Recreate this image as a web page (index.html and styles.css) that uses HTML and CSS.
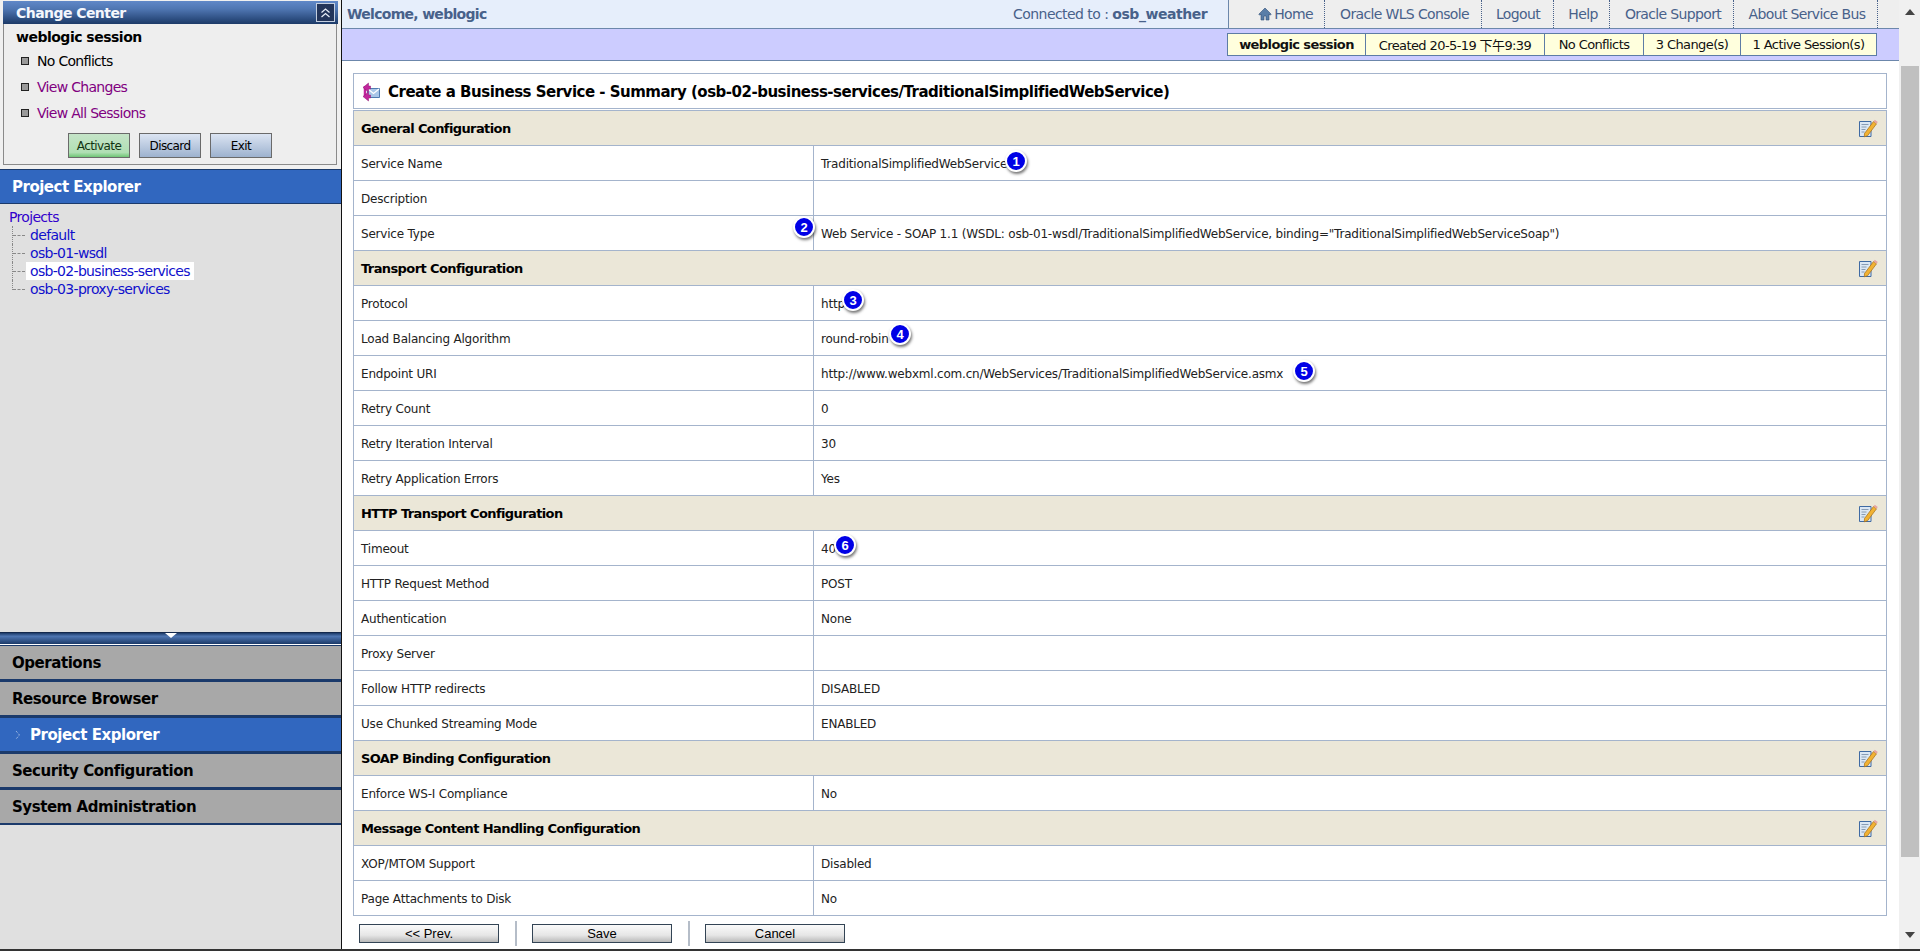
FILE: index.html
```html
<!DOCTYPE html>
<html lang="en">
<head>
<meta charset="utf-8">
<title>Create a Business Service - Summary</title>
<link rel="stylesheet" href="styles.css">
</head>
<body>
<div class="app">
  <aside class="left">
    <section class="cc">
      <div class="cc-head"><span>Change Center</span>
        <span class="cc-toggle"><svg width="13" height="12" viewBox="0 0 13 12"><path d="M2.5 5.5 6.5 2l4 3.500M2.500 10 6.500 6.500l4 3.500" fill="none" stroke="#e8eef8" stroke-width="1.200"/></svg></span>
      </div>
      <div class="cc-body">
        <div class="cc-session">weblogic session</div>
        <ul class="cc-list">
          <li>No Conflicts</li>
          <li class="visited">View Changes</li>
          <li class="visited">View All Sessions</li>
        </ul>
        <div class="cc-btns">
          <span class="cc-btn go">Activate</span>
          <span class="cc-btn">Discard</span>
          <span class="cc-btn">Exit</span>
        </div>
      </div>
    </section>
    <div class="pe-head">Project Explorer</div>
    <div class="tree">
      <div class="tree-root">Projects</div>
      <ul class="tree-list">
        <li><span class="tree-link">default</span></li>
        <li><span class="tree-link">osb-01-wsdl</span></li>
        <li><span class="tree-link sel">osb-02-business-services</span></li>
        <li><span class="tree-link">osb-03-proxy-services</span></li>
      </ul>
    </div>
    <div class="splitter"><svg width="14" height="5" viewBox="0 0 14 5"><path d="M1 0h12L7 5z" fill="#fff"/></svg></div>
    <nav class="nav">
      <div class="nav-item">Operations</div>
      <div class="nav-item">Resource Browser</div>
      <div class="nav-item on"><svg class="nav-arrow" width="6" height="10" viewBox="0 0 6 10"><path d="M1 1l3.500 4L1 9" fill="none" stroke="#b9cdea" stroke-width="1" stroke-dasharray="1 1"/></svg>Project Explorer</div>
      <div class="nav-item">Security Configuration</div>
      <div class="nav-item">System Administration</div>
    </nav>
    <div class="left-fill"></div>
  </aside>

  <main class="right">
    <header class="top">
      <div class="welcome">Welcome, weblogic</div>
      <div class="connected">Connected to : <b>osb_weather</b></div>
      <div class="links">
        <span class="lnk home"><svg width="14" height="14" viewBox="0 0 14 14"><path d="M7 1 .8 7.200l1 1L3 7v6h3V9h2v4h3V7l1.200 1.200 1-1z" fill="#5a7ea8" stroke="#2f4d75" stroke-width=".6"/></svg>Home</span>
        <span class="lnk wls">Oracle WLS Console</span>
        <span class="lnk logout">Logout</span>
        <span class="lnk help">Help</span>
        <span class="lnk support">Oracle Support</span>
        <span class="lnk about">About Service Bus</span>
      </div>
    </header>
    <div class="sessionbar">
      <div class="session">
        <span class="s-cell s1">weblogic session</span>
        <span class="s-cell s2">Created 20-5-19 下午9:39</span>
        <span class="s-cell s3">No Conflicts</span>
        <span class="s-cell s4">3 Change(s)</span>
        <span class="s-cell s5">1 Active Session(s)</span>
      </div>
    </div>

    <div class="content">
      <h1 class="title">
        <svg width="20" height="20" viewBox="0 0 20 20"><path d="M6.500 6.500h12v9h-12z" fill="#a9c6e8" stroke="#4f7bb0"/><path d="M7 7l5.500 4.500L18 7" fill="none" stroke="#fff" stroke-width="1.200"/><path d="M4 4v11" stroke="#c2259c" stroke-width="2.500"/><path d="M2 5.500 7.500 1v3h2v3h-2v3zM2 14.500 7.500 10v3h2v3h-2v3z" fill="#c2259c" stroke="#8d1b72" stroke-width=".5"/></svg>
        Create a Business Service - Summary (osb-02-business-services/TraditionalSimplifiedWebService)
      </h1>
      <table class="sum">
        <colgroup><col class="c1"><col></colgroup>
        <tbody>
          <tr class="sec"><th colspan="2">General Configuration<svg class="edit" width="20" height="20" viewBox="0 0 20 20"><use href="#ed"/></svg></th></tr>
          <tr><td>Service Name</td><td>TraditionalSimplifiedWebService</td></tr>
          <tr><td>Description</td><td></td></tr>
          <tr><td>Service Type</td><td>Web Service - SOAP 1.1 (WSDL: osb-01-wsdl/TraditionalSimplifiedWebService, binding="TraditionalSimplifiedWebServiceSoap")</td></tr>
          <tr class="sec"><th colspan="2">Transport Configuration<svg class="edit" width="20" height="20" viewBox="0 0 20 20"><use href="#ed"/></svg></th></tr>
          <tr><td>Protocol</td><td>http</td></tr>
          <tr><td>Load Balancing Algorithm</td><td>round-robin</td></tr>
          <tr><td>Endpoint URI</td><td>http://www.webxml.com.cn/WebServices/TraditionalSimplifiedWebService.asmx</td></tr>
          <tr><td>Retry Count</td><td>0</td></tr>
          <tr><td>Retry Iteration Interval</td><td>30</td></tr>
          <tr><td>Retry Application Errors</td><td>Yes</td></tr>
          <tr class="sec"><th colspan="2">HTTP Transport Configuration<svg class="edit" width="20" height="20" viewBox="0 0 20 20"><use href="#ed"/></svg></th></tr>
          <tr><td>Timeout</td><td>40</td></tr>
          <tr><td>HTTP Request Method</td><td>POST</td></tr>
          <tr><td>Authentication</td><td>None</td></tr>
          <tr><td>Proxy Server</td><td></td></tr>
          <tr><td>Follow HTTP redirects</td><td>DISABLED</td></tr>
          <tr><td>Use Chunked Streaming Mode</td><td>ENABLED</td></tr>
          <tr class="sec"><th colspan="2">SOAP Binding Configuration<svg class="edit" width="20" height="20" viewBox="0 0 20 20"><use href="#ed"/></svg></th></tr>
          <tr><td>Enforce WS-I Compliance</td><td>No</td></tr>
          <tr class="sec"><th colspan="2">Message Content Handling Configuration<svg class="edit" width="20" height="20" viewBox="0 0 20 20"><use href="#ed"/></svg></th></tr>
          <tr><td>XOP/MTOM Support</td><td>Disabled</td></tr>
          <tr><td>Page Attachments to Disk</td><td>No</td></tr>
        </tbody>
      </table>
      <div class="actions">
        <span class="act">&lt;&lt; Prev.</span>
        <span class="act-sep"></span>
        <span class="act">Save</span>
        <span class="act-sep"></span>
        <span class="act">Cancel</span>
      </div>
      <span class="badge b1">1</span>
      <span class="badge b2">2</span>
      <span class="badge b3">3</span>
      <span class="badge b4">4</span>
      <span class="badge b5">5</span>
      <span class="badge b6">6</span>
    </div>
  </main>

  <div class="scroll">
    <svg class="sc-arrow" width="10" height="6" viewBox="0 0 10 6"><path d="M5 0l5 6H0z" fill="#444"/></svg>
    <div class="sc-thumb"></div>
    <svg class="sc-arrow" width="10" height="6" viewBox="0 0 10 6"><path d="M0 0h10L5 6z" fill="#444"/></svg>
  </div>
</div>
<svg class="defs" width="0" height="0"><defs>
  <g id="ed">
    <path d="M1.500 3.500h11.500v15H1.500z" fill="#dbe7f5" stroke="#3f6aa3"/>
    <path d="M3.500 6.500h7M3.500 9h5M3.500 11.500h4M3.500 14h3" stroke="#7f93ad" stroke-width=".9"/>
    <path d="M6.500 15.500 15.500 3.500l3 2.300-9 12-3.200 1z" fill="#f1b233" stroke="#a56d15" stroke-width=".7"/>
    <path d="M15.500 3.500 16.800 1.800l3 2.300-1.300 1.700z" fill="#e6a5a0"/>
  </g>
</defs></svg>
</body>
</html>
```
FILE: styles.css
```css
* { box-sizing: border-box; }
html, body { margin: 0; height: 100%; overflow: hidden; background: #fff; }
body { font-family: "DejaVu Sans", Verdana, sans-serif; color: #000; }
ul { list-style: none; margin: 0; padding: 0; }
.defs { position: absolute; }

.app { display: flex; height: 951px; border-bottom: 2px solid #333; }

/* left column */
.left { width: 342px; flex: none; display: flex; flex-direction: column; background: #f0f0f0; border-right: 1px solid #111; padding-top: 1px; }
.cc { margin: 0 4px 4px 3px; height: 164px; display: flex; flex-direction: column; }
.cc-head { height: 23px; flex: none; display: flex; align-items: center; justify-content: space-between; padding: 0 3px 0 13px; margin-right: -1px; font-weight: 700; font-size: 14px; letter-spacing: -.55px; color: #f4f7fc; background: linear-gradient(#6088c8, #4f76b2 35%, #1c3a68); }
.cc-toggle { width: 19px; height: 19px; display: flex; align-items: center; justify-content: center; background: #23355a; border: 1px solid #c4cfe0; }
.cc-body { flex: 1; background: #eee; border: 1px solid #8a8a8a; border-top: 0; padding: 4px 0 0 12px; }
.cc-session { font-weight: 700; font-size: 14px; letter-spacing: -.5px; line-height: 18px; }
.cc-list { margin-top: 5px; font-size: 14px; letter-spacing: -.7px; }
.cc-list li { height: 26px; line-height: 21px; padding-left: 21px; position: relative; }
.cc-list li::before { content: ""; position: absolute; left: 5px; top: 6px; width: 6px; height: 6px; background: #999; border: 1px solid #222; }
.visited { color: #800080; }
.cc-btns { display: flex; gap: 9px; margin: 4px 0 0 52px; }
.cc-btn { width: 62px; height: 25px; display: flex; align-items: center; justify-content: center; font-size: 12px; letter-spacing: -.6px; border: 1px solid #6a6a6a; background: linear-gradient(#dbe4f2, #9db2cf); }
.cc-btn.go { background: linear-gradient(#c5e4c8, #b0dfb4 80%, #6fc676); color: #113311; }

.pe-head { height: 35px; flex: none; display: flex; align-items: center; padding-left: 12px; background: #3167bf; border-top: 1px solid #1b3a6b; border-bottom: 1px solid #1b3a6b; color: #fff; font-weight: 700; font-size: 15px; letter-spacing: -.5px; }
.tree { height: 428px; flex: none; background: #e0e0e0; padding: 4px 0 0 9px; font-size: 14px; letter-spacing: -.68px; color: #1010cc; line-height: 18px; }
.tree-root { color: #3300cc; }
.tree-list li { padding-left: 18px; margin-left: 3px; position: relative; }
.tree-list li::before { content: ""; position: absolute; left: 0; top: 0; bottom: 0; border-left: 1px dotted #888; }
.tree-list li:last-child::before { bottom: 8px; }
.tree-list li::after { content: ""; position: absolute; left: 1px; top: 9px; width: 12px; border-top: 1px dashed #888; }
.tree-link { display: inline-block; padding: 0 4px; margin-left: -4px; }
.tree-link.sel { background: #fff; }

.splitter { height: 12px; flex: none; display: flex; justify-content: center; background: linear-gradient(#1c3a68, #4f76b2 30%, #1c3a68); border-top: 1px solid #14294d; }
.nav { flex: none; border-top: 1px solid #fff; }
.nav-item { height: 36px; display: flex; align-items: center; padding: 0 0 0 12px; background: #a8a8a8; border-top: 1px solid #1b3a6b; border-bottom: 2px solid #1b3a6b; font-weight: 700; font-size: 15px; letter-spacing: -.45px; }
.nav-item.on { background: #3167bf; color: #fff; padding-left: 15px; }
.nav-arrow { margin-right: 9px; }
.left-fill { flex: 1; background: #e0e0e0; }

/* right column */
.right { flex: 1; min-width: 0; display: flex; flex-direction: column; }
.top { height: 29px; flex: none; display: flex; align-items: center; background: #e6eefb; border-bottom: 1px solid #6c87ab; padding-left: 5px; }
.welcome { font-weight: 700; font-size: 14px; letter-spacing: -.7px; color: #48618a; width: 666px; }
.connected { font-size: 14px; letter-spacing: -.55px; color: #48618a; width: 215px; }
.connected b { letter-spacing: -.45px; }
.links { flex: 1; height: 28px; display: flex; align-items: center; background: #eee; border-left: 1px solid #6c87ab; font-size: 14px; letter-spacing: -.65px; color: #48618a; }
.lnk { height: 28px; display: flex; align-items: center; justify-content: center; border-right: 1px dotted #48618a; flex: none; padding-left: 3px; }
.lnk svg { margin-right: 2px; }
.home { width: 96px; padding-left: 18px; }
.wls { width: 157px; }
.logout { width: 72px; padding-left: 1px; }
.help { width: 56px; }
.support { width: 124px; }
.about { width: 144px; }
.sessionbar { height: 32px; flex: none; display: flex; justify-content: flex-start; align-items: center; padding-left: 885px; background: #ccf; border-bottom: 1px solid #6c87ab; }
.session { display: flex; height: 23px; background: #ffffdd; border: 1px solid #5d7ca5; font-size: 13px; letter-spacing: -.6px; color: #111; }
.s-cell { display: flex; align-items: center; justify-content: center; border-right: 1px solid #5d7ca5; flex: none; font-family: "DejaVu Sans", "Noto Sans CJK SC", sans-serif; }
.s-cell:last-child { border-right: 0; }
.s1 { width: 138px; font-weight: 700; }
.s2 { width: 179px; }
.s3 { width: 99px; }
.s4 { width: 97px; }
.s5 { width: 135px; }

.content { flex: 1; position: relative; padding: 12px 12px 0 11px; }
.title { display: flex; align-items: center; gap: 7px; height: 36px; margin: 0 0 1px; padding: 1px 0 0 7px; border: 1px solid #a4b4cc; font-size: 15px; font-weight: 700; letter-spacing: -.5px; white-space: nowrap; }
.sum { width: 100%; border-collapse: collapse; table-layout: fixed; font-size: 12px; letter-spacing: -.2px; color: #222; }
.c1 { width: 460px; }
.sum tr { height: 35px; }
.sum td, .sum th { border: 1px solid #a4b4cc; padding: 2px 7px 0; text-align: left; white-space: nowrap; }
.sum .sec th { position: relative; padding-top: 0; background: #ebe7d8; font-size: 13px; font-weight: 700; letter-spacing: -.6px; color: #000; }
.edit { position: absolute; right: 8px; top: 7px; }
.actions { display: flex; align-items: center; height: 26px; margin: 4px 0 0 6px; }
.act { width: 140px; height: 19px; display: flex; align-items: center; justify-content: center; font-family: "Liberation Sans", Arial, sans-serif; font-size: 13px; border: 1px solid #345; background: linear-gradient(#fafafa, #e6e6e6 60%, #b9b9b9); }
.act-sep { width: 2px; height: 25px; margin: 0 15px 0 16px; background: #b5bdc8; }

.badge { position: absolute; width: 22px; height: 22px; border-radius: 50%; display: flex; align-items: center; justify-content: center; background: #0000e6; border: 2px solid #fff; box-shadow: 1px 2px 3px rgba(0,0,0,.55); color: #fff; font: 700 13px "Liberation Sans", Arial, sans-serif; }
.b1 { left: 663px; top: 89px; }
.b2 { left: 451px; top: 155px; }
.b3 { left: 500px; top: 228px; }
.b4 { left: 547px; top: 262px; }
.b5 { left: 951px; top: 299px; }
.b6 { left: 492px; top: 473px; }

/* scrollbar */
.scroll { width: 21px; flex: none; display: flex; flex-direction: column; align-items: center; background: #f0f0f0; padding: 9px 0 6px; }
.sc-thumb { width: 18px; height: 791px; margin: 51px 0 75px; background: #c0c0c0; }
```
